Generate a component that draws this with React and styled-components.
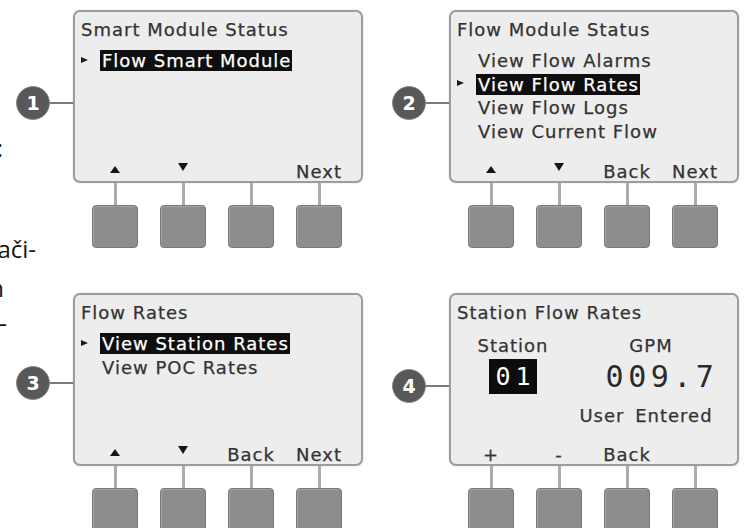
import React from "react";
import styled, { createGlobalStyle } from "styled-components";

const GlobalStyle = createGlobalStyle`
  html, body {
    margin: 0;
    padding: 0;
    background: #ffffff;
  }
  body {
    width: 750px;
    height: 528px;
    overflow: hidden;
    font-family: "DejaVu Sans", Verdana, sans-serif;
  }
`;

const Page = styled.div`
  position: relative;
  width: 750px;
  height: 528px;
  overflow: hidden;
  background: #ffffff;
`;

// cropped paragraph of the manual text at the very left edge
const Margin = styled.div`
  position: absolute;
  left: 0;
  top: 0;
  display: flex;
  flex-direction: column;
  font-family: "Open Sans", "Noto Sans", sans-serif;
  font-size: 24px;
  line-height: 24px;
  color: #151515;
`;

const MarginLine = styled.div`
  display: flex;
  justify-content: flex-end;
  width: ${(p) => p.$end}px;
  margin-top: ${(p) => p.$space}px;
  white-space: nowrap;
`;

const Grid = styled.div`
  display: grid;
  grid-template-columns: 376px 374px;
  row-gap: 45px;
  padding-top: 10px;
`;

const Panel = styled.div`
  display: flex;
  align-items: flex-start;
`;

const Callout = styled.div`
  display: flex;
  align-items: center;
  margin: ${(p) => p.$drop}px 0 0 16px;
`;

const Badge = styled.div`
  width: 34px;
  height: 34px;
  box-sizing: border-box;
  border-radius: 50%;
  border: 1.5px solid #8c8c8c;
  background: #585858;
  color: #ffffff;
  font-size: 19px;
  font-weight: bold;
  display: flex;
  align-items: center;
  justify-content: center;
`;

const Leader = styled.div`
  width: 23px;
  height: 2px;
  background: #7a7a7a;
`;

const Device = styled.div`
  display: flex;
  flex-direction: column;
  width: 290px;
`;

const Screen = styled.div`
  height: 173px;
  box-sizing: border-box;
  border: 2px solid #9c9c9c;
  border-radius: 7px;
  background: #ededed;
  box-shadow: 0 0 2px rgba(0, 0, 0, 0.15);
  padding: 8px 6px 0 6px;
  display: flex;
  flex-direction: column;
  color: #333333;
  font-size: 18px;
  letter-spacing: 1px;
  -webkit-text-stroke: 0.25px currentColor;
`;

const Title = styled.div`
  line-height: 19px;
  white-space: nowrap;
`;

const Menu = styled.div`
  margin-top: 10px;
  display: flex;
  flex-direction: column;
`;

const MenuRow = styled.div`
  display: flex;
  align-items: center;
  height: 23.5px;
  white-space: nowrap;
`;

const Pointer = styled.span`
  width: 19px;
  display: flex;
  align-items: center;

  &::before {
    content: "";
    display: ${(p) => (p.$on ? "block" : "none")};
    border-left: 7px solid #1a1a1a;
    border-top: 3.5px solid transparent;
    border-bottom: 3.5px solid transparent;
    margin-top: -2px;
  }
`;

const Item = styled.span`
  padding: 1px 1px 1px 2px;
  line-height: 19px;
  background: ${(p) => (p.$selected ? "#0e0e0e" : "transparent")};
  color: ${(p) => (p.$selected ? "#ffffff" : "inherit")};
`;

const Readout = styled.div`
  display: flex;
  margin-top: 14px;
`;

const StationCol = styled.div`
  width: 112px;
  display: flex;
  flex-direction: column;
  align-items: center;
`;

const FlowCol = styled.div`
  flex: 1;
  display: flex;
  flex-direction: column;
  align-items: center;
`;

const Caption = styled.div`
  line-height: 19px;
  white-space: nowrap;
  word-spacing: 4px;
  margin-left: ${(p) => p.$shift || 0}px;
`;

const IdBox = styled.div`
  margin-top: 4px;
  width: 48px;
  height: 35px;
  background: #0c0c0c;
  color: #ffffff;
  display: flex;
  align-items: center;
  justify-content: center;
  font-family: "DejaVu Sans Mono", "Liberation Mono", monospace;
  font-size: 25px;
  letter-spacing: 5px;
  text-indent: 5px;
  -webkit-text-stroke: 0;
`;

const Value = styled.div`
  margin-top: 4px;
  height: 35px;
  line-height: 35px;
  margin-left: ${(p) => p.$shift}px;
  font-family: "DejaVu Sans Mono", "Liberation Mono", monospace;
  font-size: 30px;
  font-weight: 300;
  letter-spacing: 4.5px;
  color: #2a2a2a;
  -webkit-text-stroke: 0;
`;

const Note = styled(Caption)`
  margin-top: 12px;
`;

const LabelRow = styled.div`
  margin-top: auto;
  display: flex;
  gap: 22px;
  padding-left: 11px;
  height: 18px;
`;

const Label = styled.div`
  width: 46px;
  display: flex;
  justify-content: center;
  align-items: flex-start;
  line-height: 18px;
  white-space: nowrap;
`;

const UpMark = styled.span`
  margin-top: 3px;
  border-bottom: 7px solid #151515;
  border-left: 5px solid transparent;
  border-right: 5px solid transparent;
`;

const DownMark = styled.span`
  margin-top: 0;
  border-top: 8px solid #151515;
  border-left: 5px solid transparent;
  border-right: 5px solid transparent;
`;

const Keys = styled.div`
  display: flex;
  gap: 22px;
  padding-left: 19px;
`;

const KeyUnit = styled.div`
  width: 46px;
  display: flex;
  flex-direction: column;
  align-items: center;
`;

const Stem = styled.div`
  width: 3px;
  height: 22px;
  background: #ababab;
`;

const Key = styled.div`
  width: 46px;
  height: 43px;
  box-sizing: border-box;
  border: 1px solid #777777;
  border-radius: 4px;
  background: #8d8d8d;
  box-shadow: inset 1px 1px 0 #a4a4a4;
`;

const renderLabel = (label) => {
  if (label === "up") return <UpMark />;
  if (label === "down") return <DownMark />;
  return label;
};

const SoftKeys = ({ labels }) => (
  <LabelRow>
    {labels.map((l, i) => (
      <Label key={i}>{l ? renderLabel(l) : null}</Label>
    ))}
  </LabelRow>
);

const KeyPad = () => (
  <Keys>
    {[0, 1, 2, 3].map((i) => (
      <KeyUnit key={i}>
        <Stem />
        <Key />
      </KeyUnit>
    ))}
  </Keys>
);

const MenuScreen = ({ title, items, selected, labels }) => (
  <Screen>
    <Title>{title}</Title>
    <Menu>
      {items.map((item, i) => (
        <MenuRow key={item}>
          <Pointer $on={i === selected} />
          <Item $selected={i === selected}>{item}</Item>
        </MenuRow>
      ))}
    </Menu>
    <SoftKeys labels={labels} />
  </Screen>
);

const RateScreen = () => (
  <Screen>
    <Title>Station Flow Rates</Title>
    <Readout>
      <StationCol>
        <Caption>Station</Caption>
        <IdBox>01</IdBox>
      </StationCol>
      <FlowCol>
        <Caption $shift={2}>GPM</Caption>
        <Value $shift={24}>009.7</Value>
        <Note $shift={-8}>User Entered</Note>
      </FlowCol>
    </Readout>
    <SoftKeys labels={["+", "-", "Back", null]} />
  </Screen>
);

const Step = ({ n, drop, children }) => (
  <Panel>
    <Callout $drop={drop}>
      <Badge>{n}</Badge>
      <Leader />
    </Callout>
    <Device>
      {children}
      <KeyPad />
    </Device>
  </Panel>
);

const marginLines = [
  { text: "status:", end: 3, space: 136 },
  { text: "brojači-", end: 36, space: 77 },
  { text: "on", end: 4, space: 15 },
  { text: "–", end: 7, space: 11 },
];

export default function App() {
  return (
    <Page>
      <GlobalStyle />
      <Margin>
        {marginLines.map((l) => (
          <MarginLine key={l.text} $end={l.end} $space={l.space}>
            {l.text}
          </MarginLine>
        ))}
      </Margin>
      <Grid>
        <Step n="1" drop={76}>
          <MenuScreen
            title="Smart Module Status"
            items={["Flow Smart Module"]}
            selected={0}
            labels={["up", "down", null, "Next"]}
          />
        </Step>
        <Step n="2" drop={76}>
          <MenuScreen
            title="Flow Module Status"
            items={[
              "View Flow Alarms",
              "View Flow Rates",
              "View Flow Logs",
              "View Current Flow",
            ]}
            selected={1}
            labels={["up", "down", "Back", "Next"]}
          />
        </Step>
        <Step n="3" drop={73}>
          <MenuScreen
            title="Flow Rates"
            items={["View Station Rates", "View POC Rates"]}
            selected={0}
            labels={["up", "down", "Back", "Next"]}
          />
        </Step>
        <Step n="4" drop={76}>
          <RateScreen />
        </Step>
      </Grid>
    </Page>
  );
}
